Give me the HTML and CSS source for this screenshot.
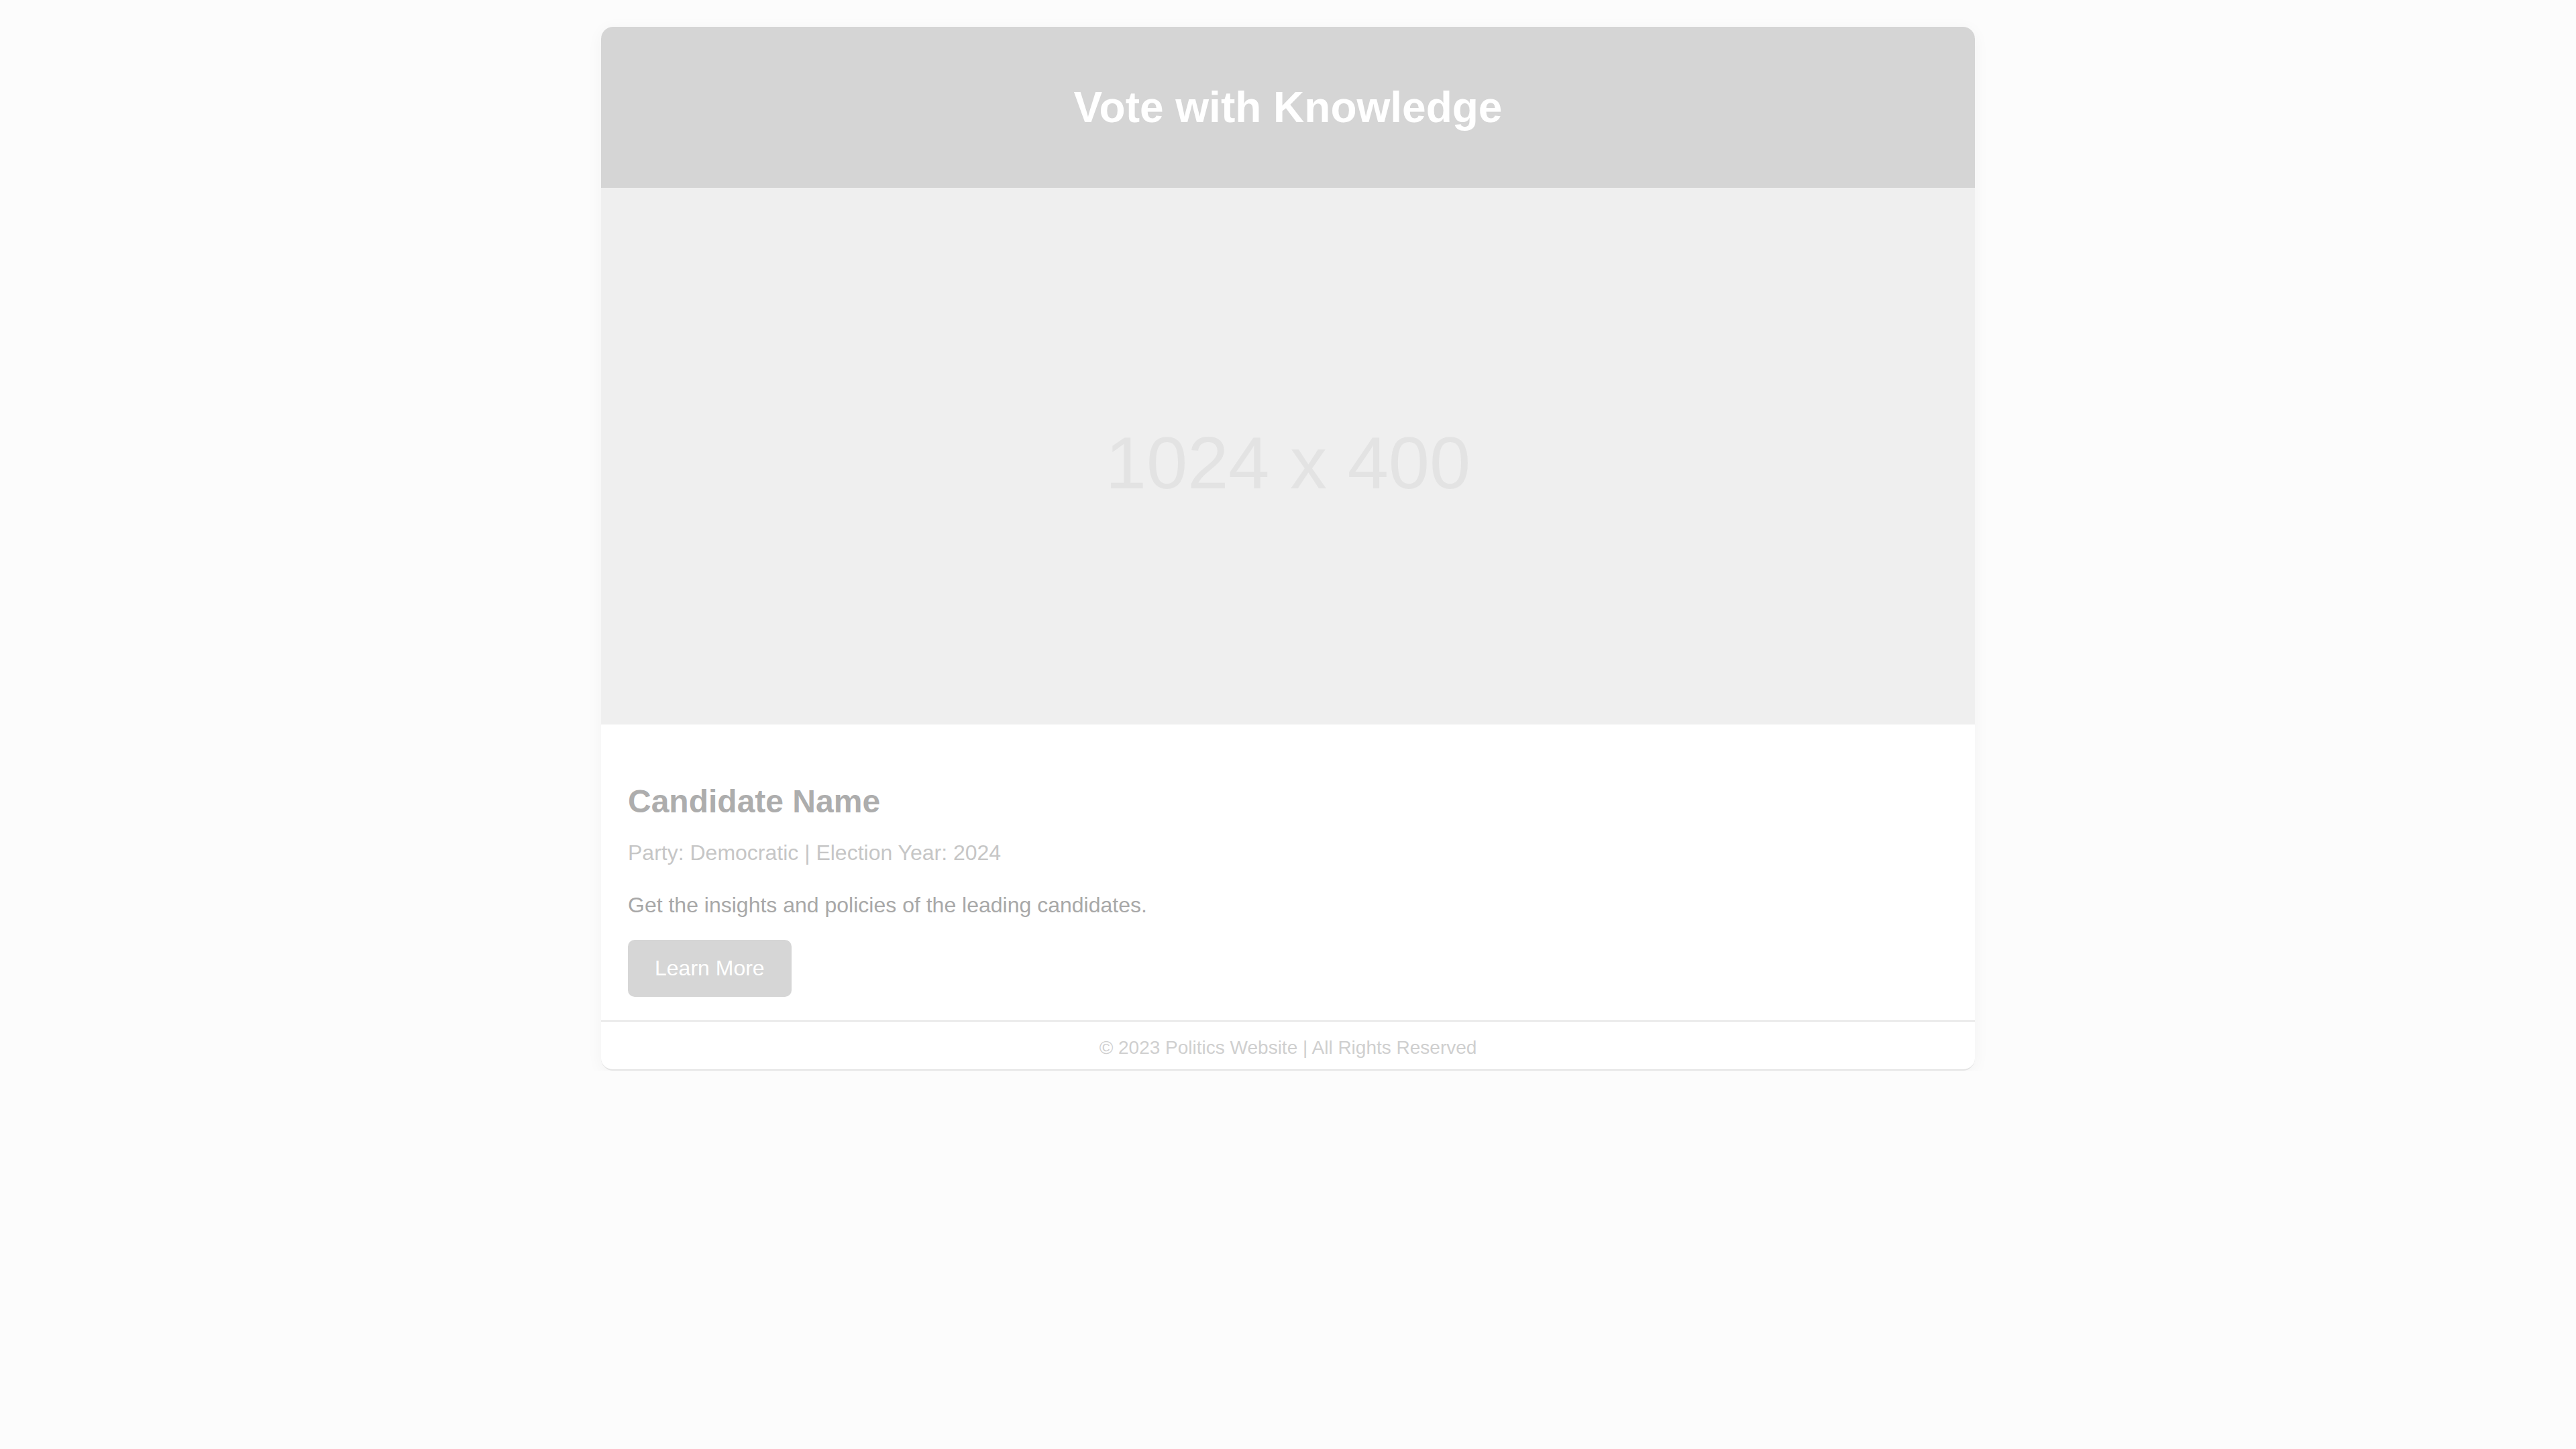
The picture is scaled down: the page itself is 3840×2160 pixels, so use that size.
FILE: index.html
```html
<!DOCTYPE html>
<html lang="en">
<head>
<meta charset="utf-8">
<title>Vote with Knowledge</title>
<link rel="stylesheet" href="styles.css">
</head>
<body>
<div class="card">
  <header class="card-header">
    <h1 class="title">Vote with Knowledge</h1>
  </header>
  <div class="hero">
    <span class="hero-text">1024 x 400</span>
  </div>
  <section class="content">
    <h2 class="name">Candidate Name</h2>
    <p class="meta">Party: Democratic | Election Year: 2024</p>
    <p class="desc">Get the insights and policies of the leading candidates.</p>
    <a class="btn" href="#">Learn More</a>
  </section>
  <footer class="card-footer">© 2023 Politics Website | All Rights Reserved</footer>
</div>
</body>
</html>
```
FILE: styles.css
```css
html, body {
  margin: 0;
  padding: 0;
  background: #fcfcfc;
  font-family: "Liberation Sans", Arial, sans-serif;
}

.card {
  width: 2048px;
  margin: 40px auto 0;
  background: #ffffff;
  border-radius: 18px;
  overflow: hidden;
  box-shadow: 0 4px 24px rgba(0, 0, 0, 0.045);
  border-bottom: 2px solid #e4e4e4;
}

.card-header {
  height: 240px;
  background: #d5d5d5;
  display: flex;
  align-items: center;
  justify-content: center;
}

.title {
  margin: 0;
  color: #ffffff;
  font-size: 64px;
  font-weight: 700;
  line-height: 1.2;
}

.hero {
  height: 800px;
  background: #efefef;
  display: flex;
  align-items: center;
  justify-content: center;
  box-sizing: border-box;
  padding-top: 20px;
}

.hero-text {
  font-size: 110px;
  color: #e3e3e3;
  line-height: 1.2;
}

.content {
  padding: 86px 40px 35px;
}

.name {
  margin: 0 0 28px;
  font-size: 48px;
  font-weight: 700;
  line-height: 1.2;
  color: #adadad;
}

.meta {
  margin: 0 0 40px;
  font-size: 32px;
  line-height: 1.2;
  color: #c6c6c6;
}

.desc {
  margin: 0 0 33px;
  font-size: 32px;
  line-height: 1.2;
  color: #a8a8a8;
}

.btn {
  display: inline-block;
  padding: 23px 40px;
  font-size: 32px;
  line-height: 1.2;
  color: #ffffff;
  background: #d6d6d6;
  border-radius: 10px;
  text-decoration: none;
}

.card-footer {
  border-top: 2px solid #e6e6e6;
  padding: 22px 0 16px;
  text-align: center;
  font-size: 28px;
  line-height: 1.2;
  color: #cfcfcf;
}
```
